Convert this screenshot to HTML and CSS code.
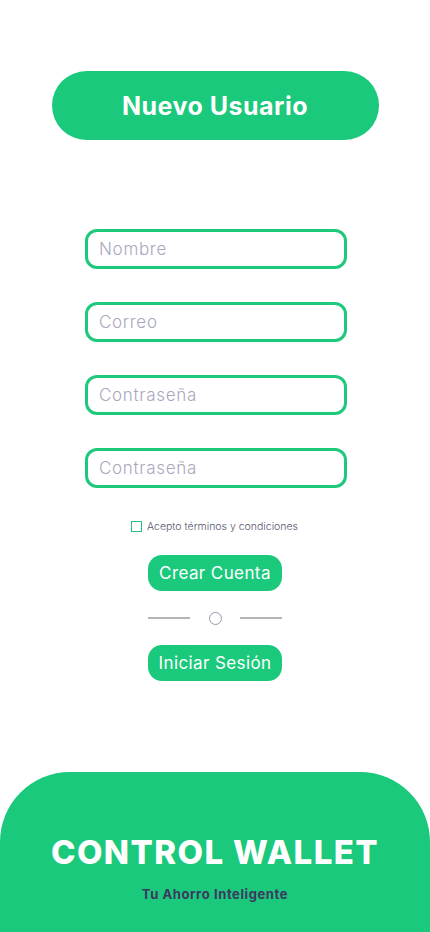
FILE: index.html
```html
<!DOCTYPE html>
<html lang="es">
<head>
<meta charset="utf-8">
<title>Nuevo Usuario</title>
<link rel="stylesheet" href="styles.css">
</head>
<body>
<div class="page">
  <div class="title-pill">Nuevo Usuario</div>
  <form class="form">
    <input class="field" type="text" placeholder="Nombre">
    <input class="field" type="email" placeholder="Correo">
    <input class="field" type="password" placeholder="Contraseña">
    <input class="field" type="password" placeholder="Contraseña">
    <label class="terms"><span class="box"></span><span>Acepto términos y condiciones</span></label>
    <button class="btn" type="button">Crear Cuenta</button>
    <div class="divider"><span class="line"></span><span class="circle"></span><span class="line"></span></div>
    <button class="btn" type="button">Iniciar Sesión</button>
  </form>
  <footer class="footer">
    <div class="brand">CONTROL WALLET</div>
    <div class="tagline">Tu Ahorro Inteligente</div>
  </footer>
</div>
</body>
</html>
```
FILE: styles.css
```css
* { box-sizing: border-box; }
html, body { margin: 0; padding: 0; background: #fff; }
body { font-family: Inter, "Open Sans", sans-serif; }
.page {
  width: 430px;
  height: 932px;
  display: flex;
  flex-direction: column;
  align-items: center;
  overflow: hidden;
}
.title-pill {
  margin-top: 71px;
  width: 327px;
  height: 69px;
  border-radius: 35px;
  background: #1bc97c;
  color: #fff;
  font-size: 25px;
  font-weight: 700;
  letter-spacing: 0.5px;
  display: flex;
  align-items: center;
  justify-content: center;
}
.form {
  margin-top: 89px;
  display: flex;
  flex-direction: column;
  align-items: center;
  width: 100%;
  padding-left: 2px;
}
.field {
  width: 262px;
  height: 40px;
  border: 3px solid #1ec97c;
  border-radius: 12px;
  padding: 0 11px;
  font-family: inherit;
  font-size: 17px;
  font-weight: 300;
  letter-spacing: 0.7px;
  color: #333;
  margin-bottom: 33px;
  outline: none;
}
.field::placeholder { color: #a9a7bd; }
.field:nth-of-type(4) { margin-bottom: 32px; }
.terms {
  display: flex;
  align-items: center;
  gap: 5px;
  font-size: 10.5px;
  font-weight: 300;
  color: #55526c;
  height: 12px;
  margin-bottom: 23px;
  margin-left: -3px;
}
.box {
  width: 11px;
  height: 11px;
  border: 1px solid #2bbf7f;
}
.btn {
  width: 134px;
  height: 36px;
  border: none;
  border-radius: 14px;
  background: #1bc97c;
  color: #fff;
  font-family: inherit;
  font-size: 17px;
  letter-spacing: 0.4px;
  padding: 0;
  margin-right: 2px;
}
.divider {
  display: flex;
  align-items: center;
  width: 134px;
  height: 54px;
  justify-content: space-between;
  margin-right: 2px;
}
.line {
  width: 42px;
  height: 2px;
  background: #b3b3b8;
}
.circle {
  width: 13px;
  height: 13px;
  border: 1.5px solid #9a98b0;
  border-radius: 50%;
}
.footer {
  margin-top: auto;
  width: 430px;
  height: 160px;
  background: #1bc97c;
  border-radius: 70px 70px 0 0;
  display: flex;
  flex-direction: column;
  align-items: center;
  padding-top: 60px;
}
.brand {
  color: #fff;
  font-size: 33px;
  font-weight: 800;
  letter-spacing: 1.4px;
  line-height: 40px;
}
.tagline {
  margin-top: 14px;
  color: #3b3860;
  font-size: 13px;
  font-weight: 700;
  letter-spacing: 0.6px;
}
```
